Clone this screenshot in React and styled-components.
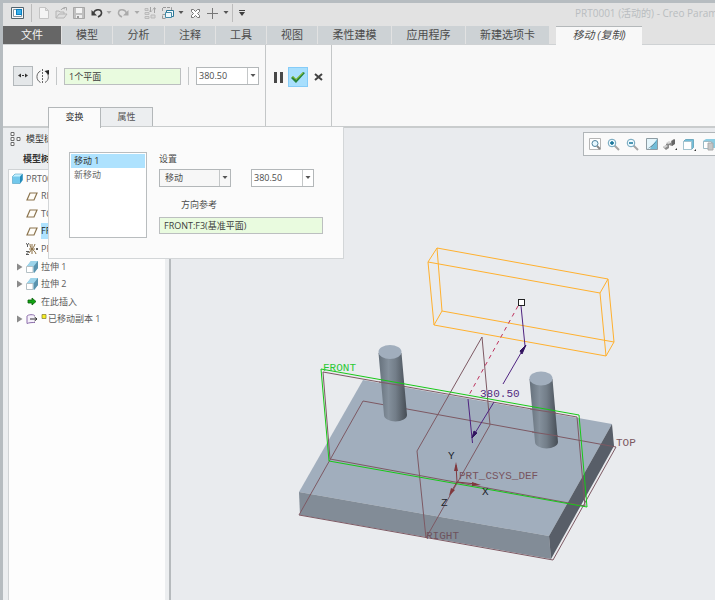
import React from "react";
import styled, { createGlobalStyle, css } from "styled-components";

const GlobalStyle = createGlobalStyle`
  * { box-sizing: border-box; }
  body {
    margin: 0;
    background: #e9ebee;
    color: #4c4c4c;
    font-family: "Open Sans", "Noto Sans CJK SC", sans-serif;
    font-size: 9px;
    line-height: 12px;
  }
  button, input, select {
    margin: 0;
    padding: 0;
    border: 0;
    border-radius: 0;
    color: inherit;
    background: none;
    font: inherit;
  }
  h2 { margin: 0; font: inherit; }
  ul { margin: 0; padding: 0; list-style: none; }
`;

const Window = styled.div`
  display: flex;
  flex-direction: column;
  min-height: 100vh;
  overflow: hidden;
  border: solid #b6bcc0;
  border-width: 3px 0 0 3px;
`;

/* ---------- title bar ---------- */

const TitleBar = styled.header`
  display: flex;
  align-items: center;
  height: 23px;
  padding: 0 0 3px 4px;
  background: #e2e2e2;
  overflow: hidden;
`;

const QuickButton = styled.button`
  display: flex;
  flex: none;
  align-items: center;
  justify-content: center;
  width: ${(p) => p.$w}px;
  height: 18px;
  svg { flex: none; }
`;

const QuickDivider = styled.span`
  flex: none;
  width: 1px;
  height: 18px;
  margin: 0 ${(p) => p.$gap}px;
  background: #bcbcbc;
`;

const WindowTitle = styled.span`
  margin-left: auto;
  flex: none;
  width: 140px;
  color: #b9bdc0;
  font-size: 10px;
  white-space: nowrap;
`;

/* ---------- ribbon ---------- */

const TabStrip = styled.nav`
  display: flex;
  height: 19px;
  gap: 1px;
  background: #e2e2e2;
  border-bottom: 1px solid #cfd2d4;
`;

const RibbonTab = styled.button`
  flex: none;
  width: ${(p) => p.$w}px;
  height: 18px;
  font-size: 11px;
  line-height: 16px;
  white-space: nowrap;
  background: #cdd2d5;
  ${(p) => p.$kind === "file" && css`
    color: #f4f4f4;
    background: #666666;
  `}
  ${(p) => p.$kind === "active" && css`
    height: 19px;
    margin-left: 6px;
    border-top: 1px solid #b4b8ba;
    padding-bottom: 2px;
    background: #f8f8f8;
    font-style: italic;
  `}
`;

const Ribbon = styled.section`
  position: relative;
  z-index: 2;
  display: flex;
  height: 83px;
  background: #f8f8f8;
  border-bottom: 2px solid #c9cccd;
`;

const RibbonMain = styled.div`
  display: flex;
  flex-direction: column;
  justify-content: space-between;
  width: 263px;
  padding-top: 20px;
  border-right: 1px solid #c4c7c8;
`;

const ControlRow = styled.div`
  display: flex;
  align-items: center;
  height: 22px;
  padding-left: 10px;
`;

const ControlDivider = styled.span`
  width: 1px;
  height: 18px;
  margin: 0 7px 0 ${(p) => p.$before}px;
  background: #c4c7c8;
`;

const ModeButton = styled.button`
  display: grid;
  place-items: center;
  width: 20px;
  height: 20px;
  ${(p) => p.$pressed && css`
    border: 1px solid #b3b8bb;
    background: #e4e7e9;
  `}
`;

const Collector = styled.input`
  width: ${(p) => p.$w}px;
  height: 17px;
  padding: 0 4px;
  color: #3d3d3d;
  background: #e9fbdf;
  border: 1px solid #bcbfc0;
`;

const ComboBox = styled.span`
  display: inline-grid;
  align-items: center;
  width: ${(p) => p.$w}px;
  height: 18px;
  border: 1px solid #b3b7b9;
  background: ${(p) => (p.$muted ? "#f7f7f7" : "#ffffff")};
`;

const ComboSelect = styled.select`
  grid-area: 1 / 1;
  width: 100%;
  height: 16px;
  padding: 0 13px 0 ${(p) => (p.$muted ? 5 : 2)}px;
  appearance: none;
`;

const ComboArrow = styled.span`
  grid-area: 1 / 1;
  justify-self: end;
  display: grid;
  place-items: center;
  width: 11px;
  height: 16px;
  border-left: 1px solid #c4c7c8;
  pointer-events: none;
`;

const PanelTabs = styled.div`
  display: flex;
  height: 19px;
  padding-left: 45px;
`;

const PanelTab = styled.button`
  position: relative;
  width: 53px;
  height: ${(p) => (p.$active ? 21 : 19)}px;
  margin-right: -1px;
  padding-bottom: ${(p) => (p.$active ? 2 : 0)}px;
  border: 1px solid #b3b7b9;
  border-bottom: 0;
  color: ${(p) => (p.$active ? "#333333" : "#555555")};
  background: ${(p) => (p.$active ? "#fbfbfb" : "#eceef0")};
  z-index: ${(p) => (p.$active ? 4 : 1)};
`;

const RibbonActions = styled.div`
  display: flex;
  align-items: center;
  width: 66px;
  padding: 0 0 17px 2px;
  border-right: 1px solid #c4c7c8;
`;

const ActionButton = styled.button`
  display: grid;
  place-items: center;
  width: 20px;
  height: 20px;
  ${(p) => p.$primary && css`
    border: 1px solid #86ccf8;
    background: #a8dffd;
  `}
`;

/* ---------- slide-down panel ---------- */

const SlidePanel = styled.div`
  position: absolute;
  top: 82px;
  left: 45px;
  display: flex;
  align-items: flex-start;
  gap: 12px;
  width: 296px;
  padding: 25px 20px 20px;
  border: 1px solid #d3d6d8;
  border-top: 0;
  background: #fbfbfb;
`;

const MoveList = styled.ul`
  width: 79px;
  height: 86px;
  padding: 1px;
  border: 1px solid #b9bdbf;
  background: #ffffff;
`;

const MoveItem = styled.li`
  height: 14px;
  padding: 0 3px;
  line-height: 14px;
  color: ${(p) => (p.$selected ? "#333333" : "#666666")};
  background: ${(p) => (p.$selected ? "#aee2fe" : "transparent")};
`;

const Settings = styled.div`
  display: flex;
  flex-direction: column;
  flex: 1;
  padding-top: 1px;
`;

const SettingsRow = styled.div`
  display: flex;
  gap: 20px;
  margin: 4px 0 12px;
`;

const DirectionLabel = styled.label`
  margin: 0 0 6px 22px;
`;

/* ---------- model tree ---------- */

const Workspace = styled.main`
  display: flex;
  flex: 1;
`;

const TreePane = styled.aside`
  display: flex;
  flex-direction: column;
  flex: none;
  width: 168px;
  padding: 1px 0 0 5px;
  border-right: 2px solid #b6babd;
  background: #eceef0;
`;

const TreeHeading = styled.div`
  display: flex;
  align-items: center;
  gap: 5px;
  height: 20px;
  padding-left: ${(p) => p.$indent}px;
  color: #333333;
  font-weight: ${(p) => (p.$strong ? 600 : 400)};
`;

const TreeBody = styled.div`
  flex: 1;
  margin-right: 4px;
  border: solid #d0d3d5;
  border-width: 1px 0 0 1px;
  background: #fdfdfd;
`;

const TreeList = styled.ul`
  display: grid;
  grid-template-rows: repeat(9, 1fr);
  height: 158px;
`;

const TreeRow = styled.li`
  display: flex;
  align-items: center;
  gap: 3px;
  padding-left: ${(p) => (p.$root ? 3 : 6)}px;
`;

const Expander = styled.span`
  display: flex;
  justify-content: flex-end;
  width: 8px;
`;

const TreeLabel = styled.span`
  display: flex;
  align-items: center;
  gap: 1px;
  height: 16px;
  color: ${(p) => (p.$selected ? "#222222" : "#5c5c5c")};
  background: ${(p) => (p.$selected ? "#aee2fe" : "transparent")};
  white-space: nowrap;
`;

/* ---------- graphics area ---------- */

const Viewport = styled.section`
  position: relative;
  flex: 1;
  min-width: 0;
  overflow: hidden;
  background: #e9ebee;
`;

const Scene = styled.svg`
  position: absolute;
  inset: 0;
  width: 100%;
  height: 100%;
`;

const SceneText = styled.text`
  font-family: "Liberation Mono", monospace;
  font-size: 11px;
  fill: ${(p) => p.$color};
`;

const ViewToolbar = styled.div`
  position: absolute;
  top: 4px;
  right: 0;
  display: flex;
  align-items: center;
  width: 132px;
  height: 24px;
  padding-left: 1px;
  overflow: hidden;
  border: 1px solid #b0b5b8;
  border-right: 0;
  background: #fafafa;
`;

const ViewButton = styled.button`
  display: grid;
  flex: none;
  place-items: center;
  width: 19px;
  height: 20px;
`;

/* ---------- icons ---------- */

const Svg = ({ w = 14, h = w, children }) => (
  <svg width={w} height={h} viewBox={`0 0 ${w} ${h}`} fill="none" aria-hidden="true">
    {children}
  </svg>
);

const Caret = ({ color = "#555" }) => (
  <Svg w={6} h={4}><path d="M.5 0h5L3 3z" fill={color} /></Svg>
);

const AppIcon = () => (
  <Svg w={13} h={12}>
    <path d="M.5.5h12v11H.5z" fill="#f5f7f8" stroke="#53636d" />
    <path d="M2.500 2.500h8v7h-8z" fill="#fff" stroke="#8296a3" />
    <path d="M5 2h6v6H5z" fill="#087fc1" />
    <path d="M6 3h4v4H6z" fill="#38aee8" />
  </Svg>
);
const NewIcon = () => (
  <Svg w={10} h={12}><path d="M.5.5h6l3 3v8h-9zM6.500.5v3h3" fill="#f4f4f4" stroke="#c5c5c5" /></Svg>
);
const OpenIcon = () => (
  <Svg w={13} h={12}>
    <path d="M1 11V4h3l1 1h4v2M1 11l3-4h8l-3 4z" fill="#ddd" stroke="#b4b4b4" />
    <path d="M6 3c1-2 3-2 4-1M8.500.5h3v3" stroke="#aaa" />
  </Svg>
);
const SaveIcon = () => (
  <Svg w={12}>
    <path d="M.5.5h11v11H.5z" fill="#c0c0c0" stroke="#a7a7a7" />
    <path d="M3 1h6v5H3z" fill="#f4f4f4" /><path d="M3 8h6v3H3z" fill="#eee" /><path d="M4 9h2v2H4z" fill="#999" />
  </Svg>
);
const UndoIcon = ({ color = "#3e3e3e" }) => (
  <Svg w={12} h={10}>
    <path d="M2.500 5C4 1 10 .5 10.500 4.500c.3 2-1.500 3.500-3.500 4.500" stroke={color} strokeWidth="1.600" />
    <path d="M.5 2v5.500H6z" fill={color} />
  </Svg>
);
const RedoIcon = () => (
  <Svg w={12} h={10}>
    <path d="M9.500 5C8 1 2 .5 1.500 4.500c-.3 2 1.500 3.500 3.500 4.500" stroke="#aaa" strokeWidth="1.500" />
    <path d="M11.500 2v5.500H6z" fill="#aaa" />
  </Svg>
);
const RegenIcon = () => (
  <Svg w={12}>
    <path d="M1 1.500h3v2H1zM1 5.500h4v2H1zM1 9.500h4v2H1zM7 8h4v3H7z" stroke="#bababa" fill="#d8d8d8" />
    <path d="M6.500 0v5M5 3.500L6.500 5 8 3.500M10.500 6V1M9 2.500L10.500.5 12 2.500" stroke="#a5a5a5" />
  </Svg>
);
const WindowsIcon = () => (
  <Svg w={13} h={12}>
    <path d="M.5 4V.5h9V3M.5 11.500V7.500H3M.5 11.500h3" stroke="#999" strokeDasharray="3 1" />
    <path d="M4.500 3.500h7v6h-7z" fill="#f7fbfd" stroke="#2a7797" /><path d="M3.500 5.500h6v5h-6z" fill="#eef7fb" stroke="#438aa6" />
  </Svg>
);
const CloseWindowIcon = () => (
  <Svg w={9}><path d="M.5.5h2l2 2 2-2h2v2l-2 2 2 2v2h-2l-2-2-2 2h-2v-2l2-2-2-2z" fill="#fff" stroke="#666" strokeWidth=".9" /></Svg>
);
const PlusIcon = () => <Svg w={11}><path d="M5.500 0v11M0 5.500h11" stroke="#777" /></Svg>;
const MenuIcon = () => (
  <Svg w={8} h={6}><path d="M1 0h6v1H1zM1 2h6L4 6z" fill="#3f3f3f" /></Svg>
);

const TranslateIcon = () => (
  <Svg w={12} h={9}>
    <path d="M2 3.500h2M5 3.500h2M8 3.500h2" stroke="#333" />
    <path d="M1 3.500L4 1.500v4zM11 3.500L8 1.500v4z" fill="#333" />
  </Svg>
);
const RotateIcon = () => (
  <Svg w={14} h={15}>
    <path d="M6.500 0v15" stroke="#666" strokeDasharray="2 1" />
    <path d="M4.500 2C0 4-.5 11 4.500 13.500M9 13.500c4-2 4-7 2-9.500" stroke="#666" />
    <path d="M8.500 2L13 1v5z" fill="#222" />
  </Svg>
);
const PauseIcon = () => <Svg w={9} h={11}><path d="M0 0h3v11H0zM6 0h3v11H6z" fill="#484848" /></Svg>;
const CheckIcon = () => (
  <Svg w={14} h={11}>
    <path d="M0 6l2-2 3 3 7-7 2 1-9 10z" fill="#28853d" />
    <path d="M1 5.500l1-1 3 3L12 .7" stroke="#b4d333" />
  </Svg>
);
const CrossIcon = () => <Svg w={9} h={8}><path d="M1 1l7 6M8 1L1 7" stroke="#424242" strokeWidth="2" /></Svg>;

const TreeTitleIcon = () => (
  <Svg w={11} h={14}>
    <path d="M1 .5h3v3H1zM1 5.500h3v3H1zM1 10.500h3v3H1zM7 5.500h3v3H7z" fill="#fff" stroke="#6c6c6c" />
  </Svg>
);
const PartIcon = () => (
  <Svg w={11}>
    <path d="M.5 3.500L3 1h7.500v6L8 10.500H.5z" fill="#72c8ec" />
    <path d="M.5 3.500L3 1h7.500L8 3.500z" fill="#c5f1ff" />
    <path d="M8 3.500L10.500 1v6L8 10.500z" fill="#228bbb" />
    <path d="M.5 3.500L3 1h7.500v6L8 10.500H.5z" stroke="#3a93b8" strokeWidth=".5" />
  </Svg>
);
const PlaneIcon = () => (
  <Svg w={12} h={9}><path d="M4 1h7L8 8H1z" fill="#fffdf8" stroke="#8b744e" strokeWidth="1.200" /></Svg>
);
const CsysIcon = () => (
  <Svg w={12}>
    <path d="M6 1v10M3 6h6M4 1c0 3 1 4 2 5s3 2 4 5M9 1C8 4 7 5 6 6s-2 3-3 4" stroke="#8a6f43" />
    <path d="M0 0l1.500 2L3 0M1.500 2v2M10 5l2 2M12 5l-2 2M0 8.500h3L0 11.500h3" stroke="#333" strokeWidth=".8" />
  </Svg>
);
const ExtrudeIcon = () => (
  <Svg w={12}>
    <path d="M1 5l4-5h7v7l-4 5z" fill="#75b9d6" /><path d="M1 5l4-5h7L8 5z" fill="#9dd4ea" />
    <path d="M8 5l4-5v7l-4 5z" fill="#5a93ad" /><path d="M.5 5.500H7v6H.5z" fill="#fff" stroke="#b4c0c5" />
  </Svg>
);
const InsertIcon = () => (
  <Svg w={12} h={9}><path d="M2 3h4V1l4 3.500L6 8V6H2z" fill="#11a413" stroke="#075e08" strokeWidth=".8" /></Svg>
);
const MovedCopyIcon = () => (
  <Svg w={12} h={10}>
    <path d="M9 2C8 0 2 .5 1 2v7.500c2-1 6-1 8-1" fill="#f6f1fb" stroke="#8b6daa" />
    <path d="M4 5h7M8.500 3l2.500 2-2.500 2" stroke="#333" />
  </Svg>
);
const NewFlag = () => (
  <Svg w={6} h={10}>
    <path d="M1 .5h4v4H1z" fill="#f6ef22" stroke="#8b853e" strokeWidth=".8" />
  </Svg>
);
const ExpandIcon = () => <Svg w={6} h={8}><path d="M0 .5L5.500 4 0 7.500z" fill="#8b8b8b" /></Svg>;

const Lens = ({ children }) => (
  <Svg w={13}>
    <path d="M7.500 7.500L12 12" stroke="#a5a5a5" strokeWidth="2" />
    <circle cx="5" cy="5" r="3.800" fill="#edfaff" stroke="#6fa3bb" />
    {children}
  </Svg>
);
const RefitIcon = () => (
  <Svg w={12}>
    <path d="M.5.5h11v11H.5z" fill="#fff" stroke="#b5b5b5" />
    <circle cx="6" cy="5.500" r="3" fill="#e7f8ff" stroke="#50839d" /><path d="M8 8l3 3" stroke="#888" strokeWidth="2" />
  </Svg>
);
const ZoomInIcon = () => <Lens><path d="M5 3v4M3 5h4" stroke="#086c94" strokeWidth="1.400" /></Lens>;
const ZoomOutIcon = () => <Lens><path d="M3 5h4" stroke="#086c94" strokeWidth="1.400" /></Lens>;
const RepaintIcon = () => (
  <Svg w={12}>
    <path d="M.5.5h11v11H.5z" fill="#e4f5fb" stroke="#8e9ca3" />
    <path d="M11 1v10H4z" fill="#72bdd8" /><path d="M1 11l3-2 7-6-6 6z" fill="#204e63" />
  </Svg>
);
const StyleIcon = () => (
  <Svg w={15} h={13}>
    <path d="M0 9l3-2V6l3-2 2 1V3l3-2v5L9 8 6 7v3l-3 2z" fill="#8a8a8a" />
    <path d="M0 9l3-2 2 1-3 2zM3 5l3-2 2 1-2 2z" fill="#d5d5d5" />
    <path d="M9 3l3-2v5L9 8z" fill="#666" /><path d="M12 12h2v-2z" fill="#333" />
  </Svg>
);
const ViewsIcon = () => (
  <Svg w={15} h={13}>
    <path d="M1.500 3.500l2-2h8v8l-2 2h-8z" fill="#72bdd9" stroke="#6eabc1" />
    <path d="M1.500 3.500h8v8h-8z" fill="#fff" stroke="#a4c3ce" /><path d="M12 13h2v-2z" fill="#333" />
  </Svg>
);
const ViewManagerIcon = () => (
  <Svg w={14} h={13}>
    <path d="M1 3l3-2h9v9H1z" fill="#8bcce2" /><path d="M1.500 3.500h8v7h-8z" fill="#fff" stroke="#9dbac5" />
    <path d="M6 5h5v7H6z" fill="#c7c7c7" stroke="#aaa" />
  </Svg>
);

/* ---------- data ---------- */

const QUICK_TOOLS = [
  ["应用程序", 20, AppIcon], null,
  ["新建", 16, NewIcon], ["打开", 18, OpenIcon], ["保存", 18, SaveIcon],
  ["撤消", 18, UndoIcon], ["撤消列表", 6, () => <Caret color="#aaa" />],
  ["重做", 22, RedoIcon], ["重做列表", 6, () => <Caret color="#aaa" />],
  ["重新生成", 20, RegenIcon], ["窗口", 16, WindowsIcon], ["窗口列表", 10, Caret],
  ["关闭窗口", 18, CloseWindowIcon], ["添加", 16, PlusIcon], ["添加列表", 12, Caret],
];

const RIBBON_TABS = [
  ["文件", 58, "file"], ["模型", 50], ["分析", 51], ["注释", 50], ["工具", 50],
  ["视图", 50], ["柔性建模", 73], ["应用程序", 73], ["新建选项卡", 83], ["移动 (复制)", 86, "active"],
];

const FEATURES = [
  { label: "RIGHT", icon: PlaneIcon },
  { label: "TOP", icon: PlaneIcon },
  { label: "FRONT", icon: PlaneIcon, selected: true },
  { label: "PRT_", icon: CsysIcon },
  { label: "拉伸 1", icon: ExtrudeIcon, expandable: true },
  { label: "拉伸 2", icon: ExtrudeIcon, expandable: true },
  { label: "在此插入", icon: InsertIcon },
  { label: "已移动副本 1", icon: MovedCopyIcon, expandable: true, flagged: true },
];

const VIEW_TOOLS = [
  ["重新调整", RefitIcon], ["放大", ZoomInIcon], ["缩小", ZoomOutIcon], ["重画", RepaintIcon],
  ["显示样式", StyleIcon], ["已保存方向", ViewsIcon], ["视图管理器", ViewManagerIcon],
];

/* ---------- composite parts ---------- */

function Combo({ label, value, width, muted }) {
  return (
    <ComboBox $w={width} $muted={muted}>
      <ComboSelect aria-label={label} $muted={muted} defaultValue={value}>
        <option>{value}</option>
      </ComboSelect>
      <ComboArrow><Caret /></ComboArrow>
    </ComboBox>
  );
}

function ModelScene() {
  return (
    <Scene role="img" aria-label="零件模型">
      <defs>
        <linearGradient id="post">
          <stop offset="0" stopColor="#65707b" />
          <stop offset=".35" stopColor="#84909c" />
          <stop offset=".6" stopColor="#737e89" />
          <stop offset="1" stopColor="#464d55" />
        </linearGradient>
      </defs>
      <g transform="translate(-171 -128)" fill="none">
        <path d="M363 380L612 424 549 536 299 492z" fill="#a1aebd" />
        <path d="M299 492L549 536 551 559 300 515z" fill="#828c97" />
        <path d="M549 536L612 424 614 446 551 559z" fill="#585e68" />

        <g stroke="#7d5963">
          <path d="M363 401L616 447 553 560 299 515z" />
          <path d="M323 372L577 417 585 506 330 459z" />
          <path d="M482 337L417 451 426 538 490 425z" />
        </g>

        <path d="M378.500 353L384 415A11.500 6.500 0 0 0 407 415L401.500 353z" fill="url(#post)" />
        <ellipse cx="390" cy="352" rx="11.500" ry="7" fill="#a1aebd" />
        <path d="M529.500 379L535 442A11.500 6.500 0 0 0 558 442L552.500 379z" fill="url(#post)" />
        <ellipse cx="541" cy="378.500" rx="11.500" ry="7" fill="#a1aebd" />

        <path d="M379 382L404 386M530 409L556 413M532 432L558 436" stroke="#7d5963" />
        <path d="M321 369L579 415 587 507 329 461z" stroke="#18c818" />

        <g stroke="#ffb02e">
          <path d="M428 262L600 293 606 356 434 325z" />
          <path d="M437 248L608 279 614 342 442 311z" />
          <path d="M428 262L437 248M600 293L608 279M606 356L614 342M434 325L442 311" />
        </g>

        <path d="M518 306L469 395" stroke="#bd315c" strokeDasharray="4 4" />
        <g stroke="#4f2380">
          <path d="M521 306L525 346 503 384M494 402L472 438M468 399L472.500 443" />
        </g>
        <path d="M526 345L520 351 522 354zM472 438L474 431 477 433z" fill="#32145f" stroke="#32145f" />
        <rect x="518.500" y="299.500" width="6" height="6" fill="#fff" stroke="#222" />

        <path d="M457 482L456 465M457 482L476 484M457 482L451 492" stroke="#80383d" />
        <path d="M456 462L454 471 458 471zM481 485L472 482 472 486zM449 496L451 488 455 490z" fill="#80383d" />

        <SceneText x="323" y="371" $color="#2cc935">FRONT</SceneText>
        <SceneText x="616" y="446" $color="#7c5961">TOP</SceneText>
        <SceneText x="426" y="539" $color="#6e535d">RIGHT</SceneText>
        <SceneText x="459" y="479" $color="#78545e">PRT_CSYS_DEF</SceneText>
        <SceneText x="480" y="397" $color="#542b80">380.50</SceneText>
        <SceneText x="448" y="459" $color="#20242c">Y</SceneText>
        <SceneText x="482" y="495" $color="#20242c">X</SceneText>
        <SceneText x="441" y="506" $color="#20242c">Z</SceneText>
      </g>
    </Scene>
  );
}

export default function App() {
  return (
    <>
      <GlobalStyle />
      <Window>
        <TitleBar>
          {QUICK_TOOLS.map((tool, i) => {
            if (!tool) return <QuickDivider key={i} $gap={4} />;
            const [label, width, Icon] = tool;
            return <QuickButton key={label} aria-label={label} $w={width}><Icon /></QuickButton>;
          })}
          <QuickDivider $gap={0} />
          <QuickButton aria-label="自定义快速访问工具栏" $w={18}><MenuIcon /></QuickButton>
          <WindowTitle>PRT0001 (活动的) - Creo Parametric</WindowTitle>
        </TitleBar>

        <TabStrip>
          {RIBBON_TABS.map(([label, width, kind]) => (
            <RibbonTab key={label} $w={width} $kind={kind}>{label}</RibbonTab>
          ))}
        </TabStrip>

        <Ribbon>
          <RibbonMain>
            <ControlRow>
              <ModeButton $pressed aria-label="平移"><TranslateIcon /></ModeButton>
              <ModeButton aria-label="旋转"><RotateIcon /></ModeButton>
              <ControlDivider $before={3} />
              <Collector $w={117} aria-label="参考" defaultValue="1个平面" />
              <ControlDivider $before={7} />
              <Combo label="偏移" value="380.50" width={63} />
            </ControlRow>
            <PanelTabs>
              <PanelTab $active>变换</PanelTab>
              <PanelTab>属性</PanelTab>
            </PanelTabs>
          </RibbonMain>
          <RibbonActions>
            <ActionButton aria-label="暂停"><PauseIcon /></ActionButton>
            <ActionButton $primary aria-label="确定"><CheckIcon /></ActionButton>
            <ActionButton aria-label="取消"><CrossIcon /></ActionButton>
          </RibbonActions>

          <SlidePanel>
            <MoveList>
              <MoveItem $selected>移动 1</MoveItem>
              <MoveItem>新移动</MoveItem>
            </MoveList>
            <Settings>
              <h2>设置</h2>
              <SettingsRow>
                <Combo label="类型" value="移动" width={72} muted />
                <Combo label="距离" value="380.50" width={63} />
              </SettingsRow>
              <DirectionLabel htmlFor="direction">方向参考</DirectionLabel>
              <Collector id="direction" $w={164} defaultValue="FRONT:F3(基准平面)" />
            </Settings>
          </SlidePanel>
        </Ribbon>

        <Workspace>
          <TreePane>
            <TreeHeading $indent={2}><TreeTitleIcon />模型树</TreeHeading>
            <TreeHeading $indent={15} $strong>模型树</TreeHeading>
            <TreeBody>
              <TreeList>
                <TreeRow $root>
                  <PartIcon />
                  <TreeLabel>PRT0001</TreeLabel>
                </TreeRow>
                {FEATURES.map(({ label, icon: Icon, expandable, selected, flagged }) => (
                  <TreeRow key={label}>
                    <Expander>{expandable && <ExpandIcon />}</Expander>
                    <Icon />
                    <TreeLabel $selected={selected}>{flagged && <NewFlag />}{label}</TreeLabel>
                  </TreeRow>
                ))}
              </TreeList>
            </TreeBody>
          </TreePane>
          <Viewport>
            <ModelScene />
            <ViewToolbar>
              {VIEW_TOOLS.map(([label, Icon]) => (
                <ViewButton key={label} aria-label={label}><Icon /></ViewButton>
              ))}
            </ViewToolbar>
          </Viewport>
        </Workspace>
      </Window>
    </>
  );
}
